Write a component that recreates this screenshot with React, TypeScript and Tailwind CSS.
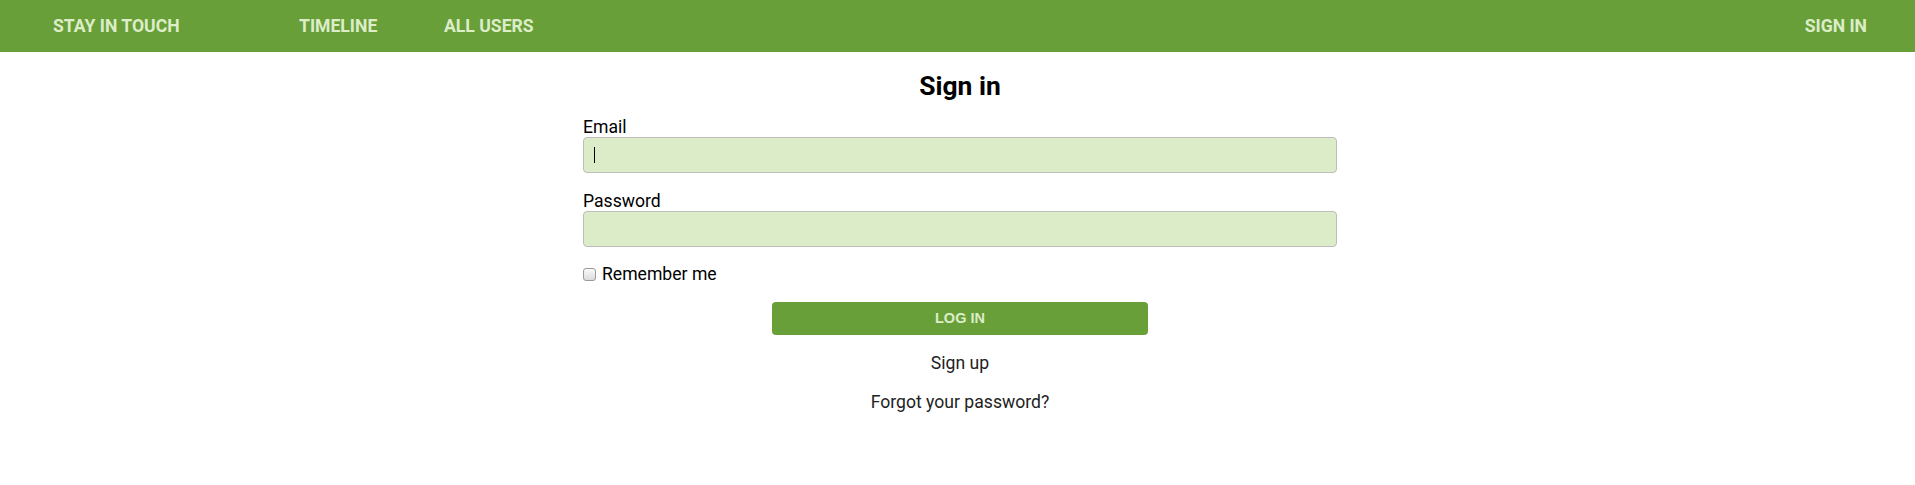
import React from "react";

export default function App() {
  const roboto = { fontFamily: "Roboto, 'Liberation Sans', sans-serif" };
  return (
    <div className="min-h-[485px] w-full bg-white text-[#111]" style={roboto}>
      <nav className="flex h-[52px] items-center bg-[#689f38] text-[17.6px] font-bold uppercase text-[#dcedc8]">
        <a className="ml-[53px] w-[246px]">Stay in touch</a>
        <a className="w-[145px]">Timeline</a>
        <a>All users</a>
        <a className="ml-auto mr-[48px]">Sign in</a>
      </nav>
      <div className="flex justify-center pl-[5px]">
        <main className="flex w-[754px] flex-col pt-[18px]">
          <h2 className="text-center text-[26.4px] font-bold leading-[32px] text-black">Sign in</h2>
          <label className="mt-[15px] text-[17.6px] leading-[20px] text-black">Email</label>
          <div className="flex h-[36px] items-center rounded-[4px] border border-[#bdbdbd] bg-[#dcecc8] pl-[10px]">
            <span className="h-[16px] w-px bg-black" />
          </div>
          <label className="mt-[18px] text-[17.6px] leading-[20px] text-black">Password</label>
          <div className="h-[36px] rounded-[4px] border border-[#bdbdbd] bg-[#dcecc8]" />
          <div className="mt-[15px] flex items-center gap-[6px]">
            <span className="h-[13px] w-[13px] rounded-[3px] border border-[#9a9a9a] bg-gradient-to-b from-[#fafafa] to-[#dcdcdc]" />
            <span className="text-[17.6px] leading-[24px] text-black">Remember me</span>
          </div>
          <button
            className="mx-auto mt-[16px] h-[33px] w-[376px] rounded-[4px] bg-[#689f38] text-[14.5px] font-bold uppercase text-[#dcedc8]"
            style={{ fontFamily: "'Liberation Sans', Arial, sans-serif" }}
          >
            Log in
          </button>
          <a className="mt-[17px] text-center text-[17.6px] leading-[22px] text-[#222]">Sign up</a>
          <a className="mt-[17px] text-center text-[17.6px] leading-[22px] text-[#222]">Forgot your password?</a>
        </main>
      </div>
    </div>
  );
}
